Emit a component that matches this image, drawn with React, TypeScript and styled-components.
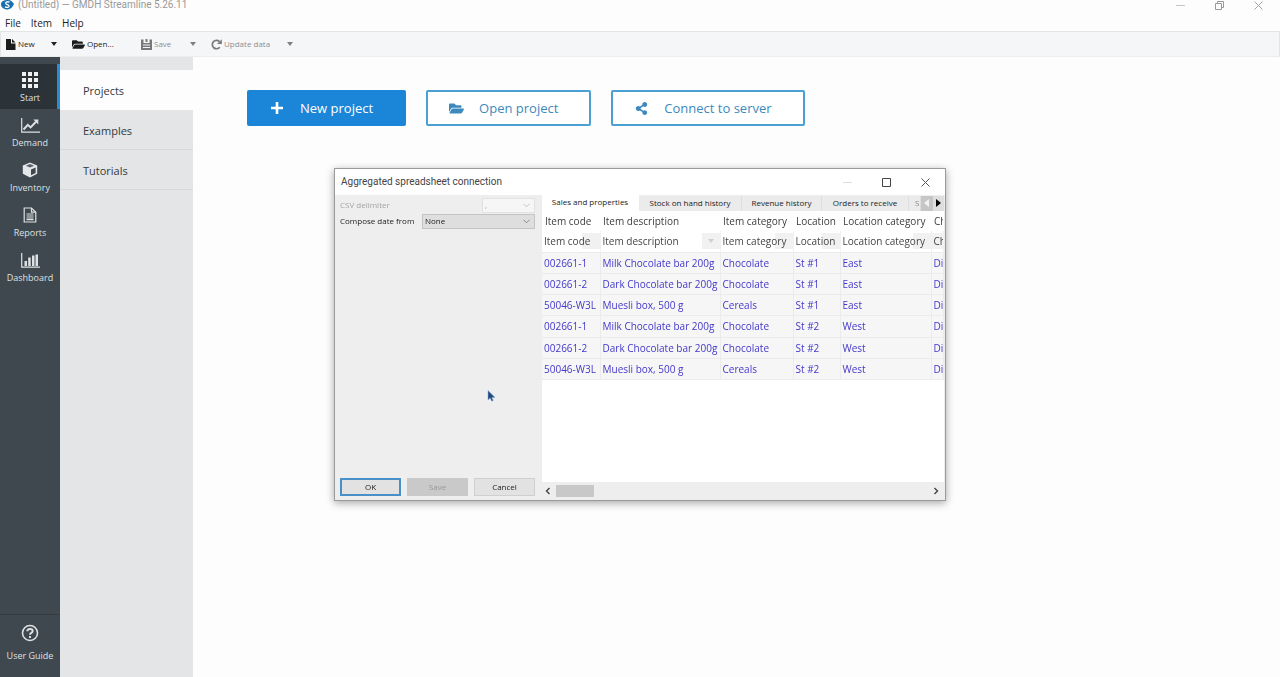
import React from 'react';
import styled, { createGlobalStyle } from 'styled-components';
import { FaFolderOpen, FaShareAlt } from 'react-icons/fa';

const GlobalStyle = createGlobalStyle`
  *, *::before, *::after { box-sizing: border-box; }
  html, body, #root { height: 100%; }
  body {
    margin: 0;
    background: #fdfdfd;
    color: #333;
    font-family: "Open Sans", "Noto Sans", sans-serif;
    overflow: hidden;
  }
  button, select, input { font: inherit; color: inherit; margin: 0; }
  button { border: 0; padding: 0; background: none; }
  a { color: inherit; text-decoration: none; }
  svg { display: block; flex: none; }
`;

const Page = styled.div`
  display: flex;
  flex-direction: column;
  height: 100%;
`;

const TitleBar = styled.header`
  display: flex;
  align-items: center;
  height: 10px;
  padding: 0 17px 0 1px;
  gap: 4px;
  color: #999;
`;

const AppTitle = styled.span`
  flex: 1;
  font-family: Roboto, "Open Sans", sans-serif;
  font-size: 10px;
  line-height: 10px;
`;

const WindowControls = styled.div`
  display: flex;
  align-items: center;
  gap: 30px;
`;

const MenuBar = styled.nav`
  display: flex;
  align-items: center;
  gap: 10px;
  height: 21px;
  padding: 5px 5px 0;
  font-size: 10px;
  line-height: 14px;
  color: #222;
`;

const Toolbar = styled.div`
  display: flex;
  align-items: center;
  height: 26px;
  padding: 0 5px;
  background: #f5f6f7;
  border: 1px solid #e2e4e5;
  border-bottom-color: #eceeee;
`;

const ToolButton = styled.button<{ $width: number }>`
  display: flex;
  align-items: center;
  gap: 2px;
  width: ${(p) => p.$width}px;
  font-size: 8px;
  line-height: 12px;
  color: #1c1c1c;
  white-space: nowrap;
  &:disabled { color: #8d8f91; }
`;

const CaretButton = styled.button<{ $width: number }>`
  display: flex;
  width: ${(p) => p.$width}px;
  color: #222;
  &:disabled { color: #7d7f81; }
`;

const Body = styled.div`
  display: flex;
  flex: 1;
  min-height: 0;
`;

const Sidebar = styled.nav`
  display: flex;
  flex-direction: column;
  width: 60px;
  padding-top: 7px;
  background: #3f484f;
`;

const SideLink = styled.a<{ $active?: boolean }>`
  display: flex;
  flex-direction: column;
  align-items: center;
  justify-content: flex-end;
  gap: 3px;
  height: 45px;
  padding-bottom: 4px;
  font-size: 9px;
  line-height: 14px;
  color: #dde1e4;
  background: ${(p) => (p.$active ? '#2b3339' : 'transparent')};
  box-shadow: ${(p) => (p.$active ? 'inset -3px 0 #2a8cd4' : 'none')};
`;

const GuideLink = styled.a`
  display: flex;
  flex-direction: column;
  align-items: center;
  gap: 7px;
  height: 63px;
  margin-top: auto;
  padding-top: 9px;
  font-size: 9px;
  line-height: 14px;
  color: #dde1e4;
  border-top: 1px solid #353d43;
`;

const Sections = styled.nav`
  width: 133px;
  padding-top: 13px;
  background: #e3e5e7;
`;

const SectionLink = styled.a<{ $active?: boolean }>`
  display: block;
  height: 40px;
  padding-left: 23px;
  font-size: 11px;
  line-height: 41px;
  color: #333a40;
  border-bottom: 1px solid ${(p) => (p.$active ? '#fdfdfd' : '#d6d8da')};
  background: ${(p) => (p.$active ? '#fdfdfd' : 'transparent')};
`;

const Main = styled.main`
  flex: 1;
  padding: 33px 54px;
`;

const Actions = styled.div`
  display: flex;
  gap: 20px;
`;

const ActionButton = styled.button<{ $primary?: boolean }>`
  display: flex;
  align-items: center;
  gap: 15px;
  height: 36px;
  padding: 0 31px 0 20px;
  font-size: 13px;
  line-height: 20px;
  border: 2px solid ${(p) => (p.$primary ? '#1b86d8' : '#4a9fd3')};
  border-radius: 2px;
  color: ${(p) => (p.$primary ? '#fff' : '#3d89bd')};
  background: ${(p) => (p.$primary ? '#1b86d8' : '#fff')};
`;

const ActionIcon = styled.span`
  display: flex;
  justify-content: center;
  width: 16px;
`;

const Overlay = styled.div`
  position: fixed;
  inset: 0;
  display: flex;
  align-items: center;
  justify-content: center;
  padding-bottom: 8px;
`;

const Dialog = styled.section`
  display: flex;
  flex-direction: column;
  width: 612px;
  height: 333px;
  border: 1px solid #9a9a9a;
  background: #eee;
  box-shadow: 0 2px 8px rgba(0, 0, 0, 0.35);
`;

const DialogHeader = styled.header`
  display: flex;
  align-items: center;
  justify-content: space-between;
  height: 26px;
  padding: 0 15px 0 6px;
  background: #fff;
  color: #444;
`;

const DialogTitle = styled.h2`
  margin: 0;
  font-family: Roboto, "Open Sans", sans-serif;
  font-size: 10px;
  font-weight: 400;
  line-height: 14px;
`;

const DialogBody = styled.div`
  display: flex;
  flex: 1;
  min-height: 0;
`;

const OptionsPane = styled.form`
  position: relative;
  display: flex;
  flex-direction: column;
  width: 207px;
  padding: 2px 7px 4px 5px;
`;

const Field = styled.div<{ $disabled?: boolean }>`
  display: flex;
  align-items: center;
  justify-content: space-between;
  height: 16px;
  font-size: 8px;
  line-height: 12px;
  color: ${(p) => (p.$disabled ? '#a5a5a5' : '#222')};
`;

const SelectBox = styled.div<{ $width: number; $shade?: boolean }>`
  display: grid;
  align-items: center;
  width: ${(p) => p.$width}px;
  height: 15px;
  border: 1px solid ${(p) => (p.$shade ? '#c4c4c4' : '#e2e2e2')};
  background: ${(p) => (p.$shade ? '#dedede' : '#f6f6f6')};
  > * { grid-area: 1 / 1; }
  svg {
    justify-self: end;
    margin-right: 4px;
    pointer-events: none;
    color: ${(p) => (p.$shade ? '#8a8a8a' : '#c4c4c4')};
  }
`;

const Select = styled.select`
  appearance: none;
  width: 100%;
  height: 13px;
  padding: 0 2px;
  border: 0;
  background: transparent;
  line-height: 12px;
  opacity: 1;
`;

const DialogButtons = styled.div`
  display: grid;
  grid-template-columns: repeat(3, 61px);
  justify-content: space-between;
  margin-top: auto;
`;

const DialogButton = styled.button<{ $focused?: boolean }>`
  height: 18px;
  font-size: 8px;
  line-height: 14px;
  color: #222;
  background: #e2e2e2;
  border: ${(p) => (p.$focused ? '2px solid #4a90c8' : '1px solid #cfcfcf')};
  &:disabled { color: #999; background: #c9c9c9; border-color: #c9c9c9; }
`;

const Pointer = styled.svg`
  position: absolute;
  left: 152px;
  top: 195px;
`;

const DataPane = styled.div`
  display: flex;
  flex-direction: column;
  flex: 1;
  min-width: 0;
  padding-right: 1px;
`;

const TabStrip = styled.div`
  display: flex;
  align-items: flex-end;
  height: 16px;
  overflow: hidden;
`;

const Tab = styled.button<{ $active?: boolean; $width: number }>`
  flex: none;
  width: ${(p) => p.$width}px;
  height: ${(p) => (p.$active ? 16 : 15)}px;
  padding-bottom: 2px;
  font-size: 8px;
  line-height: 12px;
  color: #222;
  white-space: nowrap;
  background: ${(p) => (p.$active ? '#fff' : '#ebebeb')};
  border-right: 1px solid ${(p) => (p.$active ? '#fff' : '#dedede')};
`;

const ClippedTab = styled(Tab)`
  overflow: hidden;
  padding-left: 6px;
  text-align: left;
  color: #888;
`;

const TabScroll = styled.button<{ $dim?: boolean }>`
  display: flex;
  align-items: center;
  justify-content: center;
  width: 12px;
  height: 15px;
  padding-bottom: 1px;
  color: ${(p) => (p.$dim ? '#f2f2f2' : '#000')};
  background: ${(p) => (p.$dim ? '#c6c6c6' : '#dedede')};
`;

const GridArea = styled.div`
  flex: 1;
  min-height: 0;
  overflow: hidden;
  background: #fff;
`;

const Table = styled.table`
  width: 401px;
  height: 169px;
  table-layout: fixed;
  border-collapse: collapse;
  font-size: 10px;
  line-height: 14px;
`;

const HeadCell = styled.th`
  height: 20px;
  padding: 0 0 0 3px;
  font-weight: 400;
  text-align: left;
  white-space: nowrap;
  overflow: hidden;
  color: #3c3c3c;
`;

const FilterCell = styled.td`
  height: 21px;
  padding: 0;
  color: #444;
  border-right: 1px solid #f1f1f1;
`;

const FilterBox = styled.div`
  display: grid;
  align-items: center;
  background: linear-gradient(#f1f1f1, #f1f1f1) right / 18px 100% no-repeat #fff;
  > * { grid-area: 1 / 1; }
  svg { justify-self: end; margin-right: 6px; pointer-events: none; color: #cfcfcf; }
`;

const FilterSelect = styled.select`
  display: block;
  appearance: none;
  width: 100%;
  height: 16px;
  padding: 0 0 0 2px;
  border: 0;
  border-radius: 0;
  line-height: 14px;
  text-overflow: clip;
  background: transparent;
`;

const Cell = styled.td`
  height: 21px;
  padding: 0 0 0 2px;
  white-space: nowrap;
  overflow: hidden;
  color: #4337c8;
  background: #f6f6f7;
  border: solid #ebebed;
  border-width: 1px 1px 1px 0;
`;

const ScrollBar = styled.div`
  display: flex;
  align-items: center;
  height: 18px;
  padding: 0 5px 0 3px;
  background: #eee;
  color: #444;
`;

const ScrollTrack = styled.div`
  flex: 1;
  padding: 0 5px;
`;

const ScrollThumb = styled.div`
  width: 38px;
  height: 12px;
  background: #c8c8c8;
`;

const IconButton = styled.button`
  display: flex;
`;

const Caret = () => (
  <svg width="6" height="4" viewBox="0 0 6 4" fill="currentColor" aria-hidden>
    <path d="M0 0h6L3 4z" />
  </svg>
);

const Chevron = () => (
  <svg width="7" height="5" viewBox="0 0 7 5" fill="none" stroke="currentColor" aria-hidden>
    <path d="M.5.8l3 3 3-3" />
  </svg>
);

const ArrowMark = ({ left }: { left?: boolean }) => (
  <svg width="5" height="8" viewBox="0 0 5 8" fill="currentColor" aria-hidden>
    <path d={left ? 'M5 0v8L0 4z' : 'M0 0v8l5-4z'} />
  </svg>
);

const ScrollMark = ({ left }: { left?: boolean }) => (
  <svg width="6" height="8" viewBox="0 0 6 8" fill="none" stroke="currentColor" strokeWidth="1.4" aria-hidden>
    <path d={left ? 'M4.5 1l-3 3 3 3' : 'M1.5 1l3 3-3 3'} />
  </svg>
);

const GridIcon = () => (
  <svg width="16" height="16" viewBox="0 0 16 16" fill="#eef0f1" aria-hidden>
    {[0, 6, 12].map((y) => [0, 6, 12].map((x) => <rect key={`${x}-${y}`} x={x} y={y} width="4" height="4" />))}
  </svg>
);

const LineChartIcon = () => (
  <svg width="19" height="15" viewBox="0 0 19 15" fill="none" stroke="currentColor" aria-hidden>
    <path d="M.7 0v14.2H19" strokeWidth="1.2" />
    <path d="M2.5 11.5l4.3-4.7 2.8 2.6 5.4-5.6" strokeWidth="2" />
    <path d="M12.3 1.5h5v5z" fill="currentColor" stroke="none" />
  </svg>
);

const BoxIcon = () => (
  <svg width="16" height="16" viewBox="0 0 16 16" aria-hidden>
    <path d="M8 .5l7.2 3v8.3L8 15.5.8 11.8V3.5z" fill="#e4e7e9" />
    <path d="M8 2l4.2 1.7L8 5.5 3.8 3.7z" fill="#59626a" />
    <path d="M9 7.5l4.6-2v5.4L9 13.3z" fill="#3f484f" />
  </svg>
);

const ReportIcon = () => (
  <svg width="14" height="16" viewBox="0 0 14 16" fill="none" stroke="currentColor" aria-hidden>
    <path d="M1.2 1h7.3l4.3 4.2V15H1.2z" strokeWidth="1.2" />
    <path d="M8.5 1v4.2h4.3" strokeWidth="1.2" />
    <path d="M3.5 7h7M3.5 9h7M3.5 11h7M3.5 12.7h7" strokeWidth="1.2" />
  </svg>
);

const BarChartIcon = () => (
  <svg width="19" height="15" viewBox="0 0 19 15" aria-hidden>
    <path d="M.7 0v14.2H19" fill="none" stroke="currentColor" strokeWidth="1.2" />
    <path d="M3.5 8H6v5H3.5zM7.2 4.5h2.500V13H7.2zM11 2.500h2.500V13H11zM14.5 1.500H17V13h-2.500z" fill="currentColor" />
  </svg>
);

const HelpIcon = () => (
  <svg width="18" height="18" viewBox="0 0 18 18" fill="none" stroke="currentColor" aria-hidden>
    <circle cx="9" cy="9" r="7.5" strokeWidth="1.6" />
    <path d="M6.3 7.3C6.3 4.2 11.7 4.2 11.7 7c0 1.9-2.7 1.7-2.7 3.7" strokeWidth="2" />
    <path d="M8 12h2v2H8z" fill="currentColor" stroke="none" />
  </svg>
);

const MinimizeIcon = ({ color }: { color: string }) => (
  <svg width="9" height="9" viewBox="0 0 9 9" stroke={color} aria-hidden>
    <path d="M0 4.5h9" />
  </svg>
);

const CloseIcon = ({ color }: { color: string }) => (
  <svg width="9" height="9" viewBox="0 0 9 9" stroke={color} aria-hidden>
    <path d="M.5.5l8 8M8.5.5l-8 8" />
  </svg>
);

const sideItems = [
  { label: 'Start', icon: <GridIcon />, active: true },
  { label: 'Demand', icon: <LineChartIcon /> },
  { label: 'Inventory', icon: <BoxIcon /> },
  { label: 'Reports', icon: <ReportIcon /> },
  { label: 'Dashboard', icon: <BarChartIcon /> },
];

const columns = [
  { label: 'Item code', width: 58 },
  { label: 'Item description', width: 120, arrow: true },
  { label: 'Item category', width: 73 },
  { label: 'Location', width: 47 },
  { label: 'Location category', width: 91 },
  { label: 'Ch', width: 12 },
];

const rows = [
  ['002661-1', 'Milk Chocolate bar 200g', 'Chocolate', 'St #1', 'East', 'Di'],
  ['002661-2', 'Dark Chocolate bar 200g', 'Chocolate', 'St #1', 'East', 'Di'],
  ['50046-W3L', 'Muesli box, 500 g', 'Cereals', 'St #1', 'East', 'Di'],
  ['002661-1', 'Milk Chocolate bar 200g', 'Chocolate', 'St #2', 'West', 'Di'],
  ['002661-2', 'Dark Chocolate bar 200g', 'Chocolate', 'St #2', 'West', 'Di'],
  ['50046-W3L', 'Muesli box, 500 g', 'Cereals', 'St #2', 'West', 'Di'],
];

export default function App() {
  return (
    <>
      <GlobalStyle />
      <Page>
        <TitleBar>
          <svg width="13" height="10" viewBox="0 0 13 10" aria-hidden>
            <path d="M7 0c3 0 4.5 2 6 4-1.5 3-3.5 5.5-6.5 5.5S0 8 0 4.5 3 0 7 0z" fill="#1a6fae" />
            <path d="M8.5 2.2C6 1 4 2.5 5 3.9c.8 1 3.2.7 3 2.3-.2 1.3-2.2 1.5-4 .6" fill="none" stroke="#fff" strokeWidth="1.3" />
          </svg>
          <AppTitle>(Untitled) — GMDH Streamline 5.26.11</AppTitle>
          <WindowControls>
            <IconButton aria-label="Minimize"><MinimizeIcon color="#c4c4c4" /></IconButton>
            <IconButton aria-label="Restore">
              <svg width="9" height="9" viewBox="0 0 9 9" fill="none" stroke="#999" aria-hidden>
                <path d="M.5 2.5h6v6h-6zM2.5 2.5v-2h6v6h-2" />
              </svg>
            </IconButton>
            <IconButton aria-label="Close"><CloseIcon color="#a5a5a5" /></IconButton>
          </WindowControls>
        </TitleBar>

        <MenuBar>
          <a href="#file">File</a>
          <a href="#item">Item</a>
          <a href="#help">Help</a>
        </MenuBar>

        <Toolbar>
          <ToolButton $width={45}>
            <svg width="10" height="11" viewBox="0 0 10 11" fill="currentColor" aria-hidden>
              <path d="M0 0h5v4.5h4.5V11H0zM6 0l3.5 3.5H6z" />
            </svg>
            New
          </ToolButton>
          <CaretButton $width={21} aria-label="New options"><Caret /></CaretButton>
          <ToolButton $width={69}>
            <FaFolderOpen size={13} aria-hidden />
            Open...
          </ToolButton>
          <ToolButton $width={49} disabled>
            <svg width="11" height="11" viewBox="0 0 11 11" aria-hidden>
              <path d="M0 .5h2.5V4h6V.5H11V11H0z" fill="#77797b" />
              <path d="M4.5 0h2v3h-2z" fill="#77797b" />
              <path d="M2 6h7M2 8.5h7" stroke="#f5f6f7" />
            </svg>
            Save
          </ToolButton>
          <CaretButton $width={21} aria-label="Save options" disabled><Caret /></CaretButton>
          <ToolButton $width={76} disabled>
            <svg width="11" height="11" viewBox="0 0 11 11" fill="none" aria-hidden>
              <path d="M8.5 2.6A4.2 4.2 0 1 0 8.8 8.2" stroke="#77797b" strokeWidth="1.7" />
              <path d="M10.8.3v4.7H6.1z" fill="#77797b" />
            </svg>
            Update data
          </ToolButton>
          <CaretButton $width={10} aria-label="Update options" disabled><Caret /></CaretButton>
        </Toolbar>

        <Body>
          <Sidebar>
            {sideItems.map((item) => (
              <SideLink key={item.label} href={`#${item.label.toLowerCase()}`} $active={item.active}>
                {item.icon}
                {item.label}
              </SideLink>
            ))}
            <GuideLink href="#guide">
              <HelpIcon />
              User Guide
            </GuideLink>
          </Sidebar>
          <Sections>
            <SectionLink href="#projects" $active>Projects</SectionLink>
            <SectionLink href="#examples">Examples</SectionLink>
            <SectionLink href="#tutorials">Tutorials</SectionLink>
          </Sections>
          <Main>
            <Actions>
              <ActionButton $primary>
                <ActionIcon>
                  <svg width="12" height="12" viewBox="0 0 12 12" fill="currentColor" aria-hidden>
                    <path d="M4.7 0h2.6v4.7H12v2.6H7.3V12H4.7V7.3H0V4.7h4.7z" />
                  </svg>
                </ActionIcon>
                New project
              </ActionButton>
              <ActionButton>
                <ActionIcon><FaFolderOpen size={15} aria-hidden /></ActionIcon>
                Open project
              </ActionButton>
              <ActionButton>
                <ActionIcon><FaShareAlt size={13} aria-hidden /></ActionIcon>
                Connect to server
              </ActionButton>
            </Actions>
          </Main>
        </Body>
      </Page>

      <Overlay>
        <Dialog role="dialog" aria-labelledby="dialog-title">
          <DialogHeader>
            <DialogTitle id="dialog-title">Aggregated spreadsheet connection</DialogTitle>
            <WindowControls>
              <IconButton aria-label="Minimize"><MinimizeIcon color="#ddd" /></IconButton>
              <IconButton aria-label="Maximize">
                <svg width="9" height="9" viewBox="0 0 9 9" fill="none" stroke="#444" aria-hidden>
                  <path d="M.5.5h8v8h-8z" />
                </svg>
              </IconButton>
              <IconButton aria-label="Close"><CloseIcon color="#555" /></IconButton>
            </WindowControls>
          </DialogHeader>
          <DialogBody>
            <OptionsPane>
              <Field $disabled>
                <label htmlFor="delimiter">CSV delimiter</label>
                <SelectBox $width={53}>
                  <Select id="delimiter" disabled><option>,</option></Select>
                  <Chevron />
                </SelectBox>
              </Field>
              <Field>
                <label htmlFor="compose">Compose date from</label>
                <SelectBox $width={113} $shade>
                  <Select id="compose"><option>None</option></Select>
                  <Chevron />
                </SelectBox>
              </Field>
              <DialogButtons>
                <DialogButton type="button" $focused>OK</DialogButton>
                <DialogButton type="button" disabled>Save</DialogButton>
                <DialogButton type="button">Cancel</DialogButton>
              </DialogButtons>
              <Pointer width="9" height="12" viewBox="0 0 9 12" aria-hidden>
                <path d="M1 .5v9.5l2.2-2 1.5 3.2 1.5-.7-1.4-3.1H8z" fill="#1d4a86" stroke="#8fa9c8" strokeWidth=".5" />
              </Pointer>
            </OptionsPane>
            <DataPane>
              <TabStrip role="tablist">
                <Tab role="tab" $active $width={97}>Sales and properties</Tab>
                <Tab role="tab" $width={103}>Stock on hand history</Tab>
                <Tab role="tab" $width={80}>Revenue history</Tab>
                <Tab role="tab" $width={87}>Orders to receive</Tab>
                <ClippedTab role="tab" $width={12}>S</ClippedTab>
                <TabScroll aria-label="Previous tabs" $dim><ArrowMark left /></TabScroll>
                <TabScroll aria-label="Next tabs"><ArrowMark /></TabScroll>
              </TabStrip>
              <GridArea>
                <Table>
                  <colgroup>
                    {columns.map((c) => <col key={c.label} width={c.width} />)}
                  </colgroup>
                  <thead>
                    <tr>{columns.map((c) => <HeadCell key={c.label} scope="col">{c.label}</HeadCell>)}</tr>
                  </thead>
                  <tbody>
                    <tr>
                      {columns.map((c) => (
                        <FilterCell key={c.label}>
                          <FilterBox>
                            <FilterSelect aria-label={`Field for ${c.label}`}><option>{c.label}</option></FilterSelect>
                            {c.arrow && <Caret />}
                          </FilterBox>
                        </FilterCell>
                      ))}
                    </tr>
                    {rows.map((row, r) => (
                      <tr key={r}>{row.map((value, i) => <Cell key={i}>{value}</Cell>)}</tr>
                    ))}
                  </tbody>
                </Table>
              </GridArea>
              <ScrollBar>
                <ScrollMark left />
                <ScrollTrack><ScrollThumb /></ScrollTrack>
                <ScrollMark />
              </ScrollBar>
            </DataPane>
          </DialogBody>
        </Dialog>
      </Overlay>
    </>
  );
}
